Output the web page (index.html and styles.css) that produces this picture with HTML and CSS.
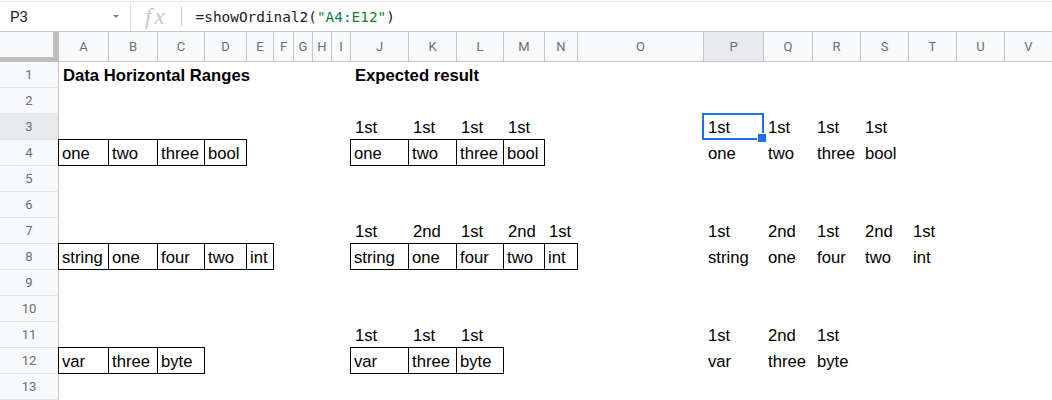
FILE: index.html
```html
<!DOCTYPE html>
<html lang="en">
  <head>
    <meta charset="UTF-8" />
    <meta name="viewport" content="width=device-width, initial-scale=1.0" />
    <title>showOrdinal2</title>
    <link rel="stylesheet" href="styles.css">
  </head>
  <body>
    <!-- Formula bar -->
    <div class="formula_bar">
      <div class="name_box">
        <span class="cell_name">P3</span>
        <span class="arrow"></span>
      </div>
      <span class="fx">fx</span>
      <span class="divider"></span>
      <span class="formula">=showOrdinal2(<span class="string">"A4:E12"</span>)</span>
    </div>

    <!-- The sheet itself, built by the script below -->
    <main class="sheet"></main>

    <script>
      const sheet = document.querySelector('.sheet');
      const columns = 'ABCDEFGHIJKLMNOPQRSTUV'.split('');
      const rowCount = 13;
      const active = { col: 'P', row: 3 };

      // cell contents, by row and column
      const data = {
        1: { A: 'Data Horizontal Ranges', J: 'Expected result' },
        3: { J: '1st', K: '1st', L: '1st', M: '1st', P: '1st', Q: '1st', R: '1st', S: '1st' },
        4: {
          A: 'one', B: 'two', C: 'three', D: 'bool',
          J: 'one', K: 'two', L: 'three', M: 'bool',
          P: 'one', Q: 'two', R: 'three', S: 'bool',
        },
        7: {
          J: '1st', K: '2nd', L: '1st', M: '2nd', N: '1st',
          P: '1st', Q: '2nd', R: '1st', S: '2nd', T: '1st',
        },
        8: {
          A: 'string', B: 'one', C: 'four', D: 'two', E: 'int',
          J: 'string', K: 'one', L: 'four', M: 'two', N: 'int',
          P: 'string', Q: 'one', R: 'four', S: 'two', T: 'int',
        },
        11: { J: '1st', K: '1st', L: '1st', P: '1st', Q: '2nd', R: '1st' },
        12: {
          A: 'var', B: 'three', C: 'byte',
          J: 'var', K: 'three', L: 'byte',
          P: 'var', Q: 'three', R: 'byte',
        },
      };

      const boldRows = [1];

      // ranges that have a black border round every cell
      const boxed = ['A4:D4', 'J4:M4', 'A8:E8', 'J8:N8', 'A12:C12', 'J12:L12'];

      function isBoxed(col, row) {
        return boxed.some((range) => {
          const [from, to] = range.split(':');
          const r = parseInt(from.slice(1));
          return (
            r == row &&
            columns.indexOf(col) >= columns.indexOf(from[0]) &&
            columns.indexOf(col) <= columns.indexOf(to[0])
          );
        });
      }

      function makeCell(className, text) {
        const div = document.createElement('div');
        div.className = className;
        if (text) div.textContent = text;
        sheet.appendChild(div);
        return div;
      }

      // header row
      makeCell('corner');
      columns.forEach((col) => {
        makeCell(col == active.col ? 'col_head selected' : 'col_head', col);
      });

      // rows
      for (let row = 1; row <= rowCount; row++) {
        makeCell(row == active.row ? 'row_head selected' : 'row_head', row);
        columns.forEach((col) => {
          let className = 'cell';
          if (isBoxed(col, row)) className += ' boxed';
          if (boldRows.includes(row)) className += ' bold';
          if (col == active.col && row == active.row) className += ' active';
          const text = data[row] ? data[row][col] : '';
          makeCell(className, text);
        });
      }
    </script>
  </body>
</html>
```

FILE: styles.css
```css
* {
  margin: 0;
  padding: 0;
  box-sizing: border-box;
}

body {
  width: 1052px;
  height: 400px;
  overflow: hidden;
  background-color: white;
  font-family: 'Liberation Sans', Arial, sans-serif;
}

/* Formula bar */
.formula_bar {
  display: flex;
  align-items: center;
  height: 30px;
  margin-top: 1px;
  border-top: 1px solid #e1e3e6;
}

.name_box {
  display: flex;
  align-items: center;
  width: 131px;
  height: 100%;
  padding-left: 10px;
  border-right: 1px solid #e1e3e6;
}

.cell_name {
  font-family: 'Roboto', sans-serif;
  font-size: 15px;
  color: #202124;
}

.arrow {
  margin-left: auto;
  margin-right: 11px;
  border-left: 3px solid transparent;
  border-right: 3px solid transparent;
  border-top: 3px solid #7a7d80;
}

.fx {
  margin-left: 14px;
  font-family: 'Liberation Serif', serif;
  font-style: italic;
  font-size: 23px;
  letter-spacing: 3px;
  color: #c6c8ca;
}

.divider {
  width: 1px;
  height: 19px;
  margin-left: 13px;
  background-color: #c4c4c4;
}

.formula {
  margin-left: 14px;
  padding-top: 1px;
  font-family: 'DejaVu Sans Mono', monospace;
  font-size: 14.4px;
  color: #202124;
}

.string {
  color: #188038;
}

/* Sheet */
.sheet {
  display: grid;
  grid-template-columns:
    59px 50px 49px 47px 42px 27px 20px 19px 19px 19px 58px 48px 47px
    41px 33px 126px 60px 49px 48px 48px 48px 48px 48px;
  grid-template-rows: 30px repeat(13, 26px);
  border-top: 1px solid #c4c7c5;
}

.corner {
  background-color: #f8f9fa;
  border-right: 1px solid #c0c0c0;
  border-bottom: 1px solid #c0c0c0;
  box-shadow: inset -5px 0 0 #bdbdbd, inset 0 -4px 0 #bdbdbd;
}

.col_head,
.row_head {
  display: flex;
  align-items: center;
  justify-content: center;
  background-color: #f8f9fa;
  font-family: 'Roboto', sans-serif;
  font-size: 13px;
  color: #6b6e72;
}

.col_head {
  border-right: 1px solid #c4c7c5;
  border-bottom: 1px solid #c4c7c5;
}

.row_head {
  border-right: 1px solid #c4c7c5;
  border-bottom: 1px solid #e1e3e6;
}

.selected {
  background-color: #e8eaed;
}

.cell {
  position: relative;
  padding: 4px 4px 0;
  font-size: 16.67px;
  line-height: 19px;
  color: #000;
  white-space: nowrap;
}

.bold {
  font-weight: bold;
}

.boxed {
  margin: -1px 0 0 -1px;
  padding: 4px 3px 0;
  border: 1px solid #000;
}

/* Selected cell P3 with its fill handle */
.active::after {
  content: '';
  position: absolute;
  top: -1px;
  left: -2px;
  right: 0;
  bottom: 0;
  border: 2px solid #1a73e8;
}

.active::before {
  content: '';
  position: absolute;
  right: -3px;
  bottom: -3px;
  width: 8px;
  height: 8px;
  background-color: #1a73e8;
  border: 1px solid white;
  z-index: 2;
}
```
